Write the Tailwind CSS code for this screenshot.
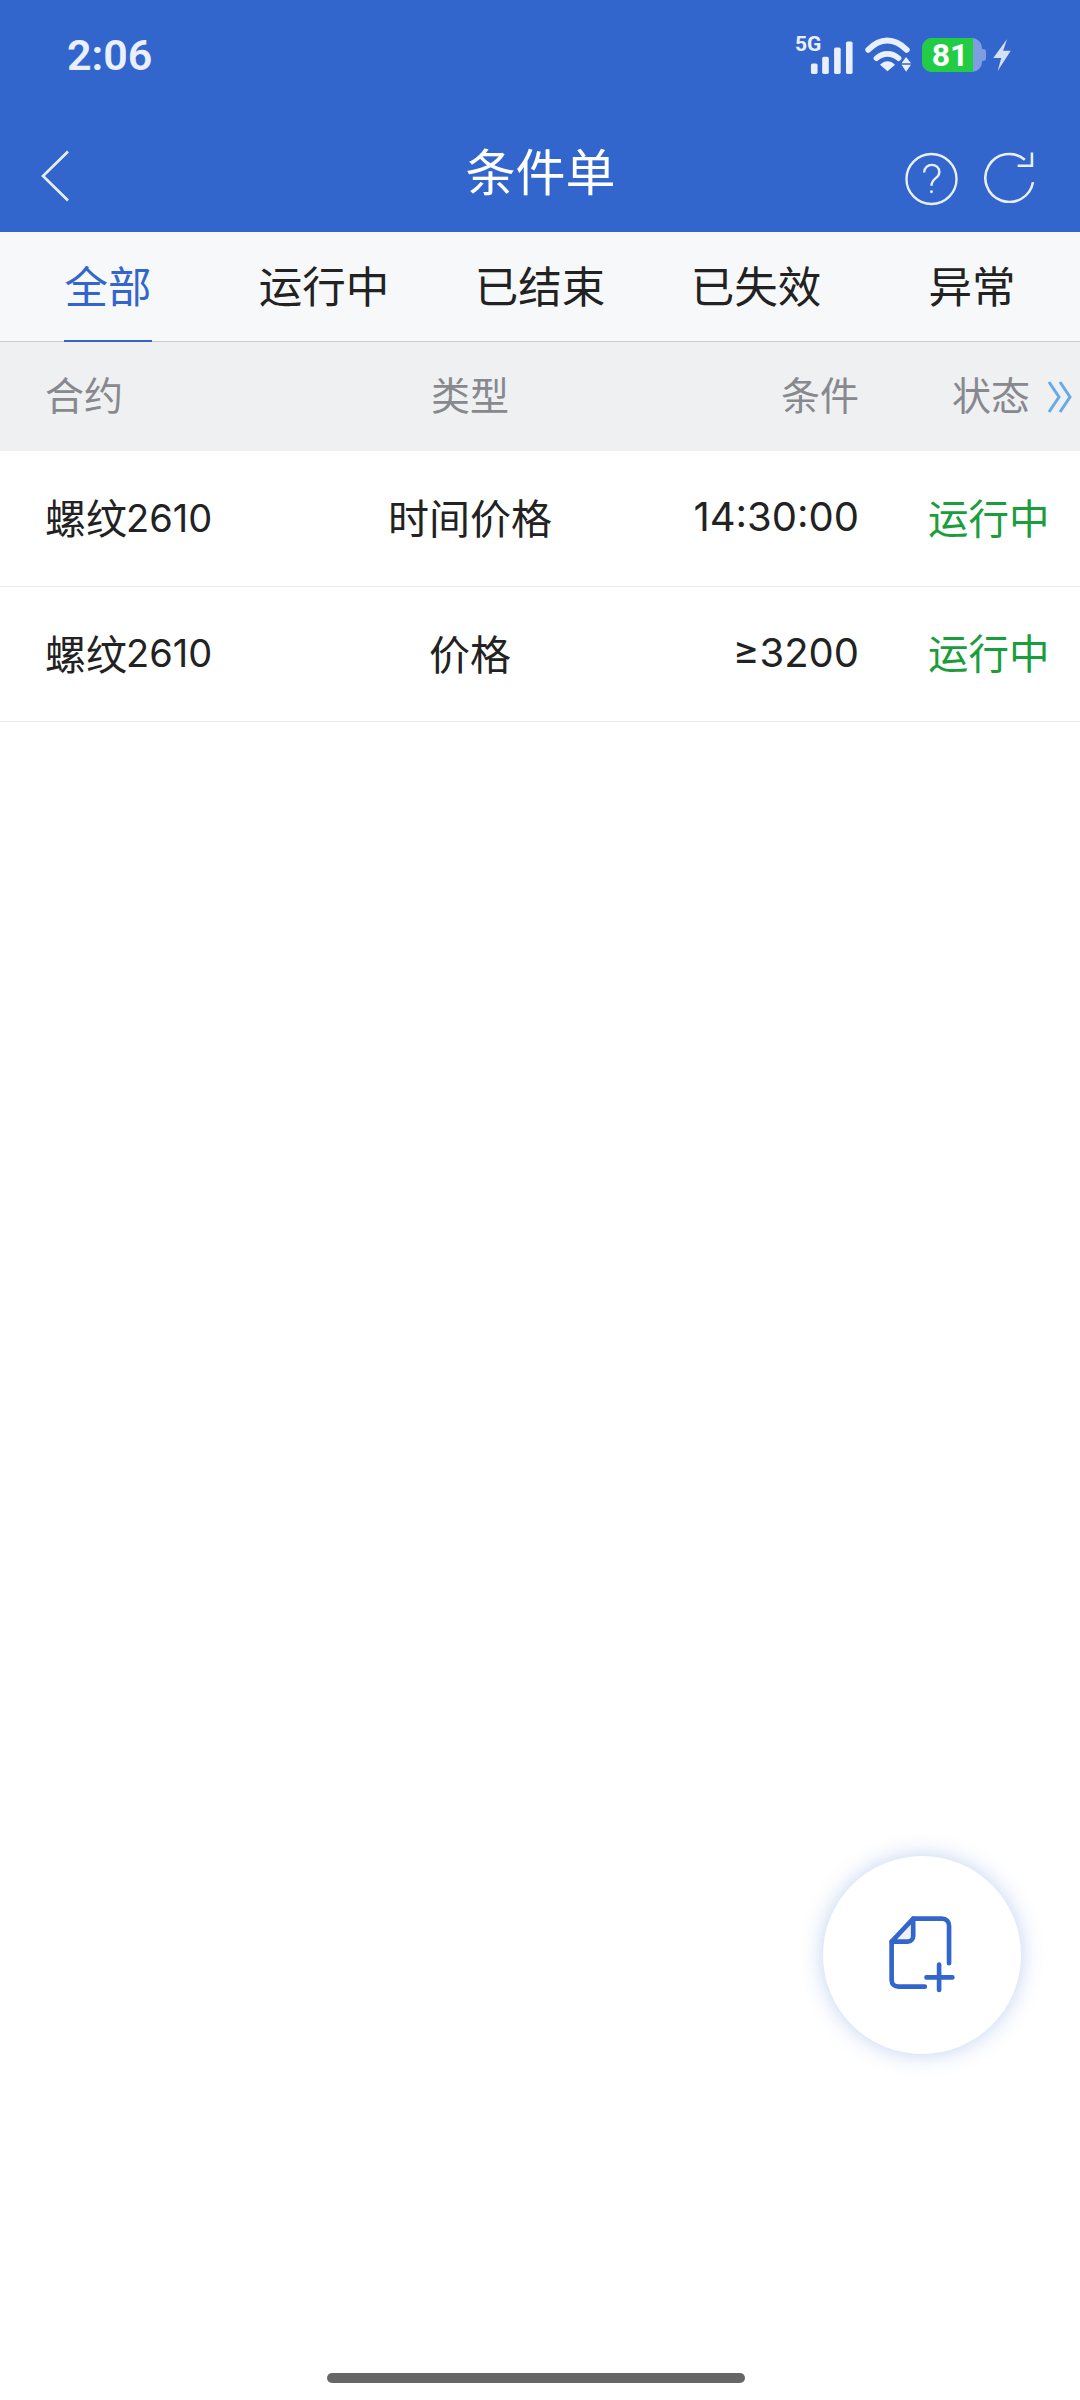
<!DOCTYPE html>
<html lang="zh-CN">
<head>
    <meta charset="UTF-8">
    <meta name="viewport" content="width=device-width, initial-scale=1.0">
    <title>条件单</title>
    <script src="https://cdn.jsdelivr.net/npm/@tailwindcss/browser@4"></script>
</head>
<body class="bg-white">
    <div class="relative w-[1080px] h-[2400px] overflow-hidden bg-white font-['Noto_Sans_CJK_SC',sans-serif] text-[#222222]">
        <!-- Header -->
        <header class="h-[232px] bg-[#3366cc] text-white">
            <!-- Status bar -->
            <div class="h-[110px] flex items-center justify-between pl-[67px] pr-[69px]">
                <span class="font-['Roboto',sans-serif] font-semibold text-[43px] leading-none text-[#e9effc]">2:06</span>
                <div class="flex items-center">
                    <div class="relative w-[59px] h-[39px]">
                        <span class="absolute left-0 top-[-2px] font-['Roboto',sans-serif] font-bold text-[21px] leading-none text-[#e9effc]">5G</span>
                        <svg class="absolute left-0 top-0" width="59" height="39" viewBox="165 95 178 118" fill="#e9effc">
                            <rect x="213" y="178" width="20" height="32" rx="5"/>
                            <rect x="247" y="158" width="20" height="52" rx="5"/>
                            <rect x="283" y="130" width="20" height="80" rx="5"/>
                            <rect x="319" y="112" width="20" height="98" rx="5"/>
                        </svg>
                    </div>
                    <svg class="ml-[11px]" width="46" height="36" viewBox="373 108 141 108" fill="none">
                        <path d="M383 146 C420 108 462 108 501 146" stroke="#e9effc" stroke-width="18" stroke-linecap="round"/>
                        <path d="M408 172 C428 154 456 154 476 172" stroke="#e9effc" stroke-width="17" stroke-linecap="round"/>
                        <path d="M419 192 C434 178 450 178 465 192 L442 212 Z" fill="#e9effc"/>
                        <path d="M499 168 L514 187 H485 Z M485 192 H514 L499 213 Z" fill="#e9effc"/>
                    </svg>
                    <!-- Battery -->
                    <div class="ml-[11px] flex items-center">
                        <div class="w-[60px] h-[34px] rounded-[10px] bg-[#7d9ee0]">
                            <div class="w-[51px] h-full bg-[#22cc44] rounded-l-[10px] flex items-center justify-center pl-[5px]">
                                <span class="font-['Roboto',sans-serif] font-bold text-[32px] leading-none text-white">81</span>
                            </div>
                        </div>
                        <div class="w-[4px] h-[12px] rounded-r-[3px] bg-[#7d9ee0]"></div>
                    </div>
                    <svg class="ml-[7px]" width="18" height="32" viewBox="758 118 48 88" fill="#d5e0f7">
                        <path d="M796 118 L758 170 H780 L770 206 L806 150 H785 Z"/>
                    </svg>
                </div>
            </div>
            <!-- Title row -->
            <div class="h-[122px] pt-[12px] pl-[41px] pr-[45px] flex items-center justify-between">
                <div class="w-[128px]">
                    <svg class="-mt-[2px]" width="28" height="52" viewBox="0 0 28 52" fill="none" stroke="#e9effc" stroke-width="2.6">
                        <path d="M27 1.500 L2 26 L27 50.500"/>
                    </svg>
                </div>
                <h1 class="flex-1 text-center text-[50px] leading-none font-normal text-white pl-[7px] pb-[17px]">条件单</h1>
                <div class="flex items-center gap-[26px] w-[130px]">
                    <svg class="mt-[3px]" width="54" height="54" viewBox="0 0 54 54" fill="none" stroke="#e9effc" stroke-width="2.400">
                        <circle cx="27" cy="27" r="25.500"/>
                        <path d="M19.500 20.500 C19.500 10 35 10 35 20 C35 26.500 27 26 27 34"/>
                        <circle cx="27" cy="40" r="1.500" fill="#e9effc" stroke="none"/>
                    </svg>
                    <svg width="52" height="52" viewBox="0 0 50 50" fill="none" stroke="#e9effc" stroke-width="2.500">
                        <path d="M48 30 A23.500 23.500 0 1 1 40 8"/>
                        <path d="M33 14 H47 V1"/>
                    </svg>
                </div>
            </div>
        </header>

        <!-- Tabs -->
        <nav class="h-[110px] grid grid-cols-5 bg-[#f7f8fa] border-b-[1.500px] border-[#c9cbd2] text-[43.500px] leading-none">
            <div class="relative flex items-center justify-center pb-[4px] text-[#3366cc]">
                全部
                <div class="absolute bottom-[-1px] left-[64px] w-[88px] h-[2px] bg-[#3366cc]"></div>
            </div>
            <div class="flex items-center justify-center pb-[4px]">运行中</div>
            <div class="flex items-center justify-center pb-[4px]">已结束</div>
            <div class="flex items-center justify-center pb-[4px]">已失效</div>
            <div class="flex items-center justify-center pb-[4px]">异常</div>
        </nav>

        <!-- Table head -->
        <div class="h-[109px] grid grid-cols-[250px_350px_214px_221px] pl-[45px] pb-[6px] items-center bg-[#eff0f2] text-[39px] leading-none text-[#88898f]">
            <div>合约</div>
            <div class="text-center">类型</div>
            <div class="text-right">条件</div>
            <div class="flex items-center pl-[93px]">
                <span>状态</span>
                <svg class="ml-[17px] mt-[6px]" width="26" height="34" viewBox="0 0 26 34" fill="none" stroke="#6aa9e8" stroke-width="3">
                    <path d="M2 2 L12 17 L2 32"/>
                    <path d="M13 2 L23 17 L13 32"/>
                </svg>
            </div>
        </div>

        <!-- Rows -->
        <div class="h-[135.500px] grid grid-cols-[250px_350px_214px_221px] pl-[45px] pb-[3px] items-center border-b-[1.500px] border-[#e8e9ee] text-[41px] leading-none">
            <div class="flex items-center">螺纹<span class="font-['Inter',sans-serif] text-[38px] pt-[2px] -ml-[1px]">2610</span></div>
            <div class="text-center">时间价格</div>
            <div class="text-right font-['Inter',sans-serif] text-[40px] pt-[1px]">14:30:00</div>
            <div class="pl-[69px] text-[40.500px] text-[#1a9e3c]">运行中</div>
        </div>
        <div class="h-[135.500px] grid grid-cols-[250px_350px_214px_221px] pl-[45px] pb-[3px] items-center border-b-[1.500px] border-[#e8e9ee] text-[41px] leading-none">
            <div class="flex items-center">螺纹<span class="font-['Inter',sans-serif] text-[38px] pt-[2px] -ml-[1px]">2610</span></div>
            <div class="text-center">价格</div>
            <div class="text-right font-['Inter',sans-serif] text-[40px] pt-[2px]">≥3200</div>
            <div class="pl-[69px] text-[40.500px] text-[#1a9e3c]">运行中</div>
        </div>

        <!-- Floating add button -->
        <button class="absolute left-[823px] top-[1856px] w-[198px] h-[198px] rounded-full bg-white shadow-[0_0_22px_rgba(51,102,204,0.3)] flex items-center justify-center">
            <svg width="67" height="78" viewBox="330 290 200 235" fill="none" stroke="#3366cc" stroke-width="14" stroke-linecap="round" stroke-linejoin="round">
                <path d="M337 367 L402 298 V350 C402 360 395 367 385 367 Z" fill="#f0f2f8"/>
                <path d="M437 503 H358 C345 503 337 495 337 483 V367"/>
                <path d="M402 298 H488 C502 298 510 306 510 320 V432"/>
                <path d="M442 475 H520 M480 436 V513"/>
            </svg>
        </button>

        <!-- Home indicator -->
        <div class="absolute left-[327px] bottom-[17px] w-[418px] h-[10px] rounded-full bg-[#666666]"></div>
    </div>
</body>
</html>
